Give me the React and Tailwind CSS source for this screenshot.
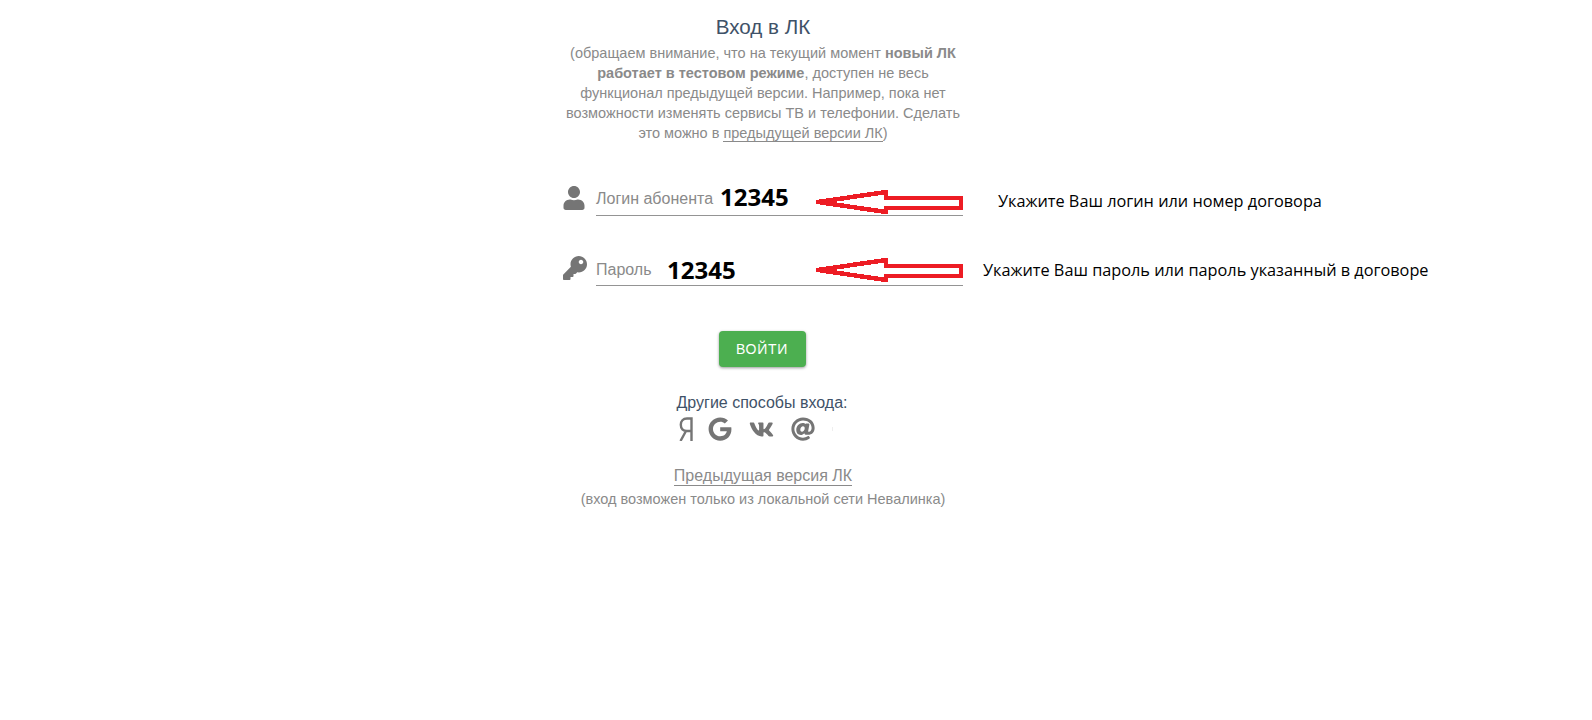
import { FaUser, FaKey, FaGoogle, FaVk, FaAt } from 'react-icons/fa';

// красная стрелка, нарисованная поверх скриншота
function RedArrow({ className }) {
  return (
    <svg className={className} width="150" height="26" viewBox="0 0 150 26" fill="none" shapeRendering="crispEdges">
      <polygon
        points="4,13 72,3 72,9 147,9 147,19 72,19 72,23"
        stroke="#ed1c24"
        strokeWidth="4.5"
        strokeLinejoin="round"
      />
    </svg>
  );
}

function YandexIcon() {
  return (
    <svg className="ml-[2px] -mr-[2px]" width="14" height="24" viewBox="0 0 14 24" fill="none" stroke="#757575" strokeWidth="2.4">
      <path d="M12.5 24V1.5H8C4 1.5 1.8 4 1.8 7.8S4 14 8 14h4.5M7 14L1.5 24" />
    </svg>
  );
}

function Field({ icon, label, labelClass, value, valueClass, arrowClass, note, noteClass }) {
  return (
    <div className="relative flex items-end h-[50px]">
      <div className="w-[33px] h-[37px] flex items-center text-[#757575]">{icon}</div>
      <div className={`flex-1 border-b border-[#949494] text-base leading-[32px] text-[#8a8a8a] ${labelClass}`}>{label}</div>
      <span className={`absolute font-['Open_Sans'] font-bold text-[24px] text-black ${valueClass}`}>{value}</span>
      <RedArrow className={`absolute left-[251px] ${arrowClass}`} />
      <span className={`absolute whitespace-nowrap font-['Open_Sans'] text-[16.3px] text-black ${noteClass}`}>{note}</span>
    </div>
  );
}

export default function App() {
  return (
    <div className="min-h-[720px] bg-white font-['Liberation_Sans',sans-serif] pl-[563px]">
      <div className="w-[400px] flex flex-col items-center text-center">
        <h1 className="mt-[13px] text-[20.6px] leading-[28px] text-[#3f5268]">Вход в ЛК</h1>
        <p className="mt-[2px] w-[400px] text-[14.5px] leading-[20px] text-[#8a8a8a]">
          (обращаем внимание, что на текущий момент <b>новый ЛК<br />работает в тестовом режиме</b>, доступен не весь<br />
          функционал предыдущей версии. Например, пока нет<br />
          возможности изменять сервисы ТВ и телефонии. Сделать<br />
          это можно в <a className="border-b border-[#8a8a8a]">предыдущей версии ЛК</a>)
        </p>

        <div className="w-full mt-[23px] flex flex-col gap-[20px] text-left">
          <Field
            icon={<FaUser className="w-[22px] h-[24px]" />}
            label="Логин абонента"
            labelClass="h-[33px]"
            value="12345"
            valueClass="left-[157px] top-[13px]"
            arrowClass="top-[23px]"
            note="Укажите Ваш логин или номер договора"
            noteClass="left-[435px] top-[23px]"
          />
          <Field
            icon={<FaKey className="w-[24px] h-[24px]" />}
            label="Пароль"
            labelClass="h-[32px]"
            value="12345"
            valueClass="left-[104px] top-[16px]"
            arrowClass="top-[21px]"
            note="Укажите Ваш пароль или пароль указанный в договоре"
            noteClass="left-[420px] top-[22px]"
          />
        </div>

        <button className="mt-[45px] mr-[2px] w-[87px] h-[36px] rounded bg-[#4caf50] text-white text-sm tracking-wider shadow-[0_1px_3px_rgba(0,0,0,0.4)]">
          ВОЙТИ
        </button>

        <div className="mt-[24px] mr-[2px] text-base leading-[24px] text-[#3f5268]">Другие способы входа:</div>
        <div className="flex items-center gap-[17px] mt-[1px] mr-[17px] h-[26px] text-[#757575]">
          <YandexIcon />
          <FaGoogle className="w-[24px] h-[24px]" />
          <FaVk className="w-[25px] h-[25px]" />
          <FaAt className="w-[24px] h-[24px]" />
          <span className="w-px h-[4px] bg-[#eeeeee]" />
        </div>

        <a className="mt-[25px] text-base leading-[18px] text-[#8a8a8a] border-b border-[#8a8a8a]">Предыдущая версия ЛК</a>
        <div className="mt-[3px] text-[14.5px] leading-[20px] text-[#8a8a8a]">(вход возможен только из локальной сети Невалинка)</div>
      </div>
    </div>
  );
}
